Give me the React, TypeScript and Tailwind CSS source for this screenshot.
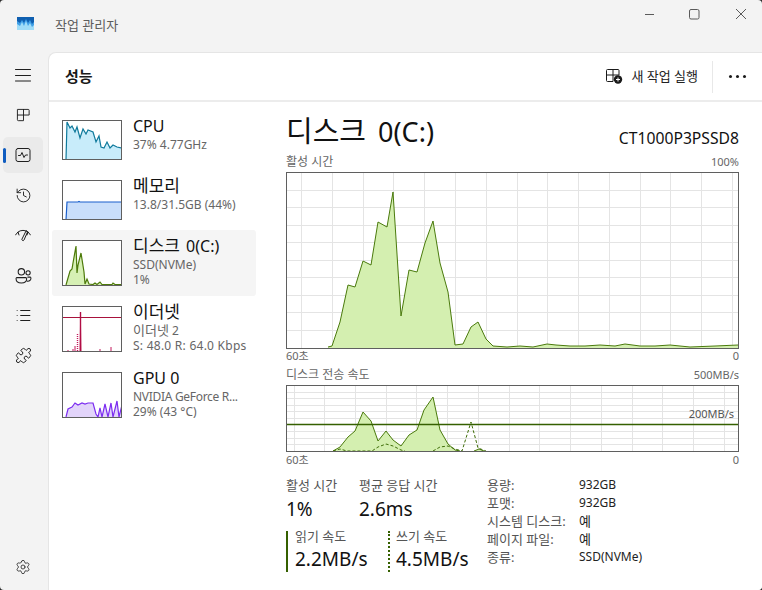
import { History, List, Puzzle, Settings } from 'lucide-react';
import type { ReactNode } from 'react';

const fontStack = "font-['Noto_Sans','Noto_Sans_CJK_KR',sans-serif]";

type P = [number, number];

function pts(list: P[]) {
  return list.map((p) => p.join(',')).join(' ');
}

function Area({ line, base, stroke, fill, dashed, width = 1 }: { line: P[]; base: number; stroke: string; fill?: string; dashed?: boolean; width?: number }) {
  const closed: P[] = [[line[0][0], base], ...line, [line[line.length - 1][0], base]];
  return (
    <>
      {fill && <polygon points={pts(closed)} fill={fill} stroke="none" />}
      <polyline points={pts(line)} fill="none" stroke={stroke} strokeWidth={width} strokeDasharray={dashed ? '3 2' : undefined} />
    </>
  );
}

function Graph({ x, y, w, h, className, children }: { x: number; y: number; w: number; h: number; className: string; children: ReactNode }) {
  return (
    <div className={`border border-[#5f5f5f] bg-white ${className}`}>
      <svg viewBox={`${x + 1} ${y + 1} ${w - 2} ${h - 2}`} preserveAspectRatio="none" className="block w-full h-full">
        {children}
      </svg>
    </div>
  );
}

const cpuLine: P[] = [[66, 160], [67, 122], [70, 128], [72, 126], [75, 132], [77, 127], [80, 138], [83, 129], [86, 134], [88, 130], [93, 132], [96, 142], [99, 136], [101, 147], [104, 148], [107, 142], [110, 148], [113, 145], [117, 147], [122, 148]];
const memLine: P[] = [[66, 220], [67, 202], [78, 202], [79, 201.5], [80, 202], [122, 202]];
const diskLine: P[] = [[66, 285], [70, 271], [72, 269], [73, 263], [76, 246], [77, 273], [78, 265], [81, 253], [84, 272], [85, 284], [87, 279], [89, 284], [93, 284.5], [95, 283], [97, 284.5], [100, 282], [102, 284.5], [112, 284.5], [113, 283], [115, 284.5], [122, 284.5]];
const gpuLine: P[] = [[66, 417], [68, 409], [72, 407], [75, 403], [78, 405], [82, 403], [85, 404], [88, 403], [93, 403], [96, 414], [98, 417], [100, 408], [102, 417], [105, 404], [108, 417], [111, 403], [113, 417], [117, 401], [119, 417], [122, 405]];

const activeLine: P[] = [[328, 347], [332, 346], [340, 322], [348, 285], [355, 287], [363, 261], [371, 265], [378, 222], [387, 227], [393, 192], [401, 316], [409, 270], [417, 272], [425, 243], [433, 221], [440, 263], [448, 292], [455, 345], [463, 344], [471, 327], [478, 322], [486, 339], [493, 346], [507, 347], [520, 346], [533, 347], [547, 344], [556, 345], [570, 346], [585, 346], [600, 345], [615, 346], [625, 344], [640, 346], [655, 346], [670, 345], [690, 347], [715, 346], [738, 345]];
const readLine: P[] = [[333, 451], [340, 447], [348, 437], [355, 431], [363, 412], [371, 421], [378, 441], [386, 431], [393, 440], [401, 446], [409, 435], [417, 430], [424, 410], [433, 397], [440, 430], [448, 444], [455, 450], [460, 451]];
const writeLine1: P[] = [[333, 451], [340, 449], [347, 451], [372, 451], [378, 447], [386, 444], [393, 446], [401, 450], [405, 451]];
const writeLine2: P[] = [[433, 451], [440, 447], [448, 446], [455, 449], [462, 451], [471, 422], [478, 448], [486, 451]];
const smallBump: P[] = [[474, 451], [479, 449], [484, 451]];

const bigGridV = [301, 332, 363, 393, 424, 455, 486, 517, 547, 578, 609, 640, 670, 701, 732];
const lowGridV = [294, 324, 355, 386, 416, 447, 478, 509, 539, 570, 601, 632, 662, 693, 724];

function NavItem({ active, children }: { active?: boolean; children: ReactNode }) {
  return (
    <div className={`relative h-[36px] w-[40px] mb-[4px] flex items-center justify-center rounded-[5px] text-[#1f1f1f] ${active ? 'bg-[#eaeaea]' : ''}`}>
      {active && <span className="absolute left-0 top-[11px] h-[15px] w-[3px] rounded-full bg-[#0f5cc0]" />}
      {children}
    </div>
  );
}

function Icon({ children, size = 16 }: { children: ReactNode; size?: number }) {
  return (
    <svg width={size} height={size} viewBox="0 0 16 16" fill="none" stroke="currentColor" strokeWidth="1" strokeLinecap="round" strokeLinejoin="round">
      {children}
    </svg>
  );
}

function Row({ title, sub, third, selected, graph }: { title: ReactNode; sub: ReactNode; third?: ReactNode; selected?: boolean; graph: ReactNode }) {
  return (
    <div className={`flex ml-[3px] w-[204px] pl-[10px] pt-[10px] gap-[10px] rounded-[3px] ${third ? 'h-[66px]' : 'h-[60px]'} ${selected ? 'bg-[#f5f5f5]' : ''}`}>
      {graph}
      <div className="min-w-0 -mt-[5px] pl-[1px]">
        <div className="text-[16px] leading-[22px] text-[#111] whitespace-nowrap">{title}</div>
        <div className="text-[12px] leading-[15px] text-[#666] whitespace-nowrap">{sub}</div>
        {third && <div className="text-[12px] leading-[15px] text-[#666] whitespace-nowrap">{third}</div>}
      </div>
    </div>
  );
}

const specs = [
  ['용량:', '932GB'],
  ['포맷:', '932GB'],
  ['시스템 디스크:', '예'],
  ['페이지 파일:', '예'],
  ['종류:', 'SSD(NVMe)'],
];

export default function App() {
  return (
    <div className={`w-[762px] h-[590px] bg-[#2a2a2a] overflow-hidden ${fontStack}`}>
      <div className="w-full h-full bg-[#f3f3f3] rounded-[4px] flex flex-col overflow-hidden">
        {/* title bar */}
        <div className="h-[52px] shrink-0 flex items-start relative">
          <svg width="17" height="13" viewBox="0 0 17 13" className="ml-[17px] mt-[17px]">
            <rect width="17" height="13" fill="#9fdcf8" />
            <path d="M0 1 H17 V8 L15 10 L13 6 L11 9 L9 4 L7 9 L5 5 L3 9 L0 7 Z" fill="#3f9fe6" />
            <path d="M0 0 H17 V5 L15 7 L13 3 L11 6 L9 2 L7 6 L5 3 L3 6 L0 4 Z" fill="#0f5fb0" />
          </svg>
          <span className="ml-[21px] mt-[16px] text-[13px] leading-[18px] text-[#5c5c5c]">작업 관리자</span>
          <svg width="111" height="20" viewBox="0 0 111 20" fill="none" stroke="#5a5a5a" strokeWidth="1" className="ml-auto mt-[4px] mr-[6px]">
            <path d="M-1 10.5 H9" />
            <rect x="44.5" y="5.5" width="9.5" height="9.5" rx="1.5" />
            <path d="M91 5 L101 15 M101 5 L91 15" />
          </svg>
        </div>

        <div className="flex-1 flex min-h-0">
          {/* nav rail */}
          <div className="w-[48px] shrink-0 flex flex-col px-[3px] pt-[5px] pb-[1px]">
            <NavItem>
              <Icon size={16}>
                <path d="M0.5 2.5 H15.5 M0.5 8.5 H15.5 M0.5 14 H15.5" />
              </Icon>
            </NavItem>
            <NavItem>
              <Icon size={15}>
                <path d="M2 1.5 H13 A1 1 0 0 1 14 2.5 V7.5 H8 V13.5 H2.5 A1 1 0 0 1 1.5 12.5 V2 Z M8 1.5 V7.5 M1.5 7.5 H8" />
              </Icon>
            </NavItem>
            <NavItem active>
              <Icon size={16}>
                <rect x="1" y="1.5" width="14" height="13" rx="2" />
                <path d="M3.5 8.5 H5.5 L7 5.5 L9 10.5 L10.5 8 H12.5" />
              </Icon>
            </NavItem>
            <NavItem>
              <History size={17} strokeWidth={1.3} />
            </NavItem>
            <NavItem>
              <Icon size={16}>
                <path d="M0.5 8 L3 5 L4 8 M12 8 L13 5 L15.5 8 M3 5 A8 8 0 0 1 13 5" />
                <path d="M11 4 L7 12 A1 1 0 0 0 9 13 L12.5 5 Z" />
              </Icon>
            </NavItem>
            <NavItem>
              <Icon size={17}>
                <circle cx="6" cy="4.5" r="3" />
                <circle cx="12.3" cy="5.5" r="2" />
                <path d="M1.5 10 H10 A1 1 0 0 1 11 11 C11 13.5 9 15 6 15 C3 15 1 13.5 1 11 A1 1 0 0 1 1.5 10 Z" />
                <path d="M12 9.5 H14.5 A1 1 0 0 1 15 10.5 C15 12.5 13.5 13.5 11.5 13.3" />
              </Icon>
            </NavItem>
            <NavItem>
              <List size={17} strokeWidth={1.5} />
            </NavItem>
            <NavItem>
              <Puzzle size={17} strokeWidth={1.4} />
            </NavItem>
            <div className="mt-auto">
              <NavItem>
                <Settings size={16} strokeWidth={1.2} />
              </NavItem>
            </div>
          </div>

          {/* content */}
          <div className="flex-1 min-w-0 bg-white rounded-tl-[8px] border-l border-t border-[#e5e5e5] flex flex-col">
            <div className="h-[49px] shrink-0 border-b-2 border-[#ececec] flex items-center pl-[16px]">
              <span className="text-[15px] font-semibold text-[#1a1a1a]">성능</span>
              <svg width="17" height="15" viewBox="0 0 17 15" fill="none" stroke="#1a1a1a" className="ml-auto">
                <path d="M1.5 0.5 H12 A1 1 0 0 1 13 1.5 V6 H7 V12.5 H1.5 A1 1 0 0 1 0.5 11.5 V1.5 A1 1 0 0 1 1.5 0.5 Z M7 0.5 V6 M0.5 6 H7" />
                <circle cx="12" cy="10.5" r="4.2" fill="#1a1a1a" stroke="none" />
                <path d="M12 8.5 V12.5 M10 10.5 H14" stroke="#fff" />
              </svg>
              <span className="ml-[8px] text-[13px] text-[#222]">새 작업 실행</span>
              <div className="ml-[14px] w-px h-[32px] bg-[#e8e8e8]" />
              <div className="ml-[16px] mr-[16px] flex gap-[4px]">
                <span className="w-[3px] h-[3px] rounded-full bg-[#1a1a1a]" />
                <span className="w-[3px] h-[3px] rounded-full bg-[#1a1a1a]" />
                <span className="w-[3px] h-[3px] rounded-full bg-[#1a1a1a]" />
              </div>
            </div>

            <div className="flex-1 flex min-h-0">
              {/* device list */}
              <div className="w-[237px] shrink-0 pt-[8px]">
                <Row
                  title="CPU"
                  sub="37% 4.77GHz"
                  graph={
                    <Graph x={62} y={120} w={60} h={40} className="w-[60px] h-[40px] shrink-0">
                      <Area line={cpuLine} base={160} stroke="#0f7a9c" fill="#c8ecfa" width={1.2} />
                    </Graph>
                  }
                />
                <Row
                  title={<span className="text-[17px]">메모리</span>}
                  sub="13.8/31.5GB (44%)"
                  graph={
                    <Graph x={62} y={180} w={60} h={40} className="w-[60px] h-[40px] shrink-0">
                      <Area line={memLine} base={220} stroke="#1a5fcc" fill="#c9defa" width={1.2} />
                    </Graph>
                  }
                />
                <Row
                  selected
                  title={
                    <span className="[word-spacing:2px]">
                      <span className="text-[17px]">디스크</span> 0(C:)
                    </span>
                  }
                  sub="SSD(NVMe)"
                  third="1%"
                  graph={
                    <Graph x={62} y={240} w={60} h={46} className="w-[60px] h-[46px] shrink-0">
                      <Area line={diskLine} base={285} stroke="#4d7a0a" fill="#d6f0b4" width={1.2} />
                    </Graph>
                  }
                />
                <Row
                  title={<span className="text-[17px]">이더넷</span>}
                  sub={
                    <>
                      <span className="text-[13px]">이더넷</span> 2
                    </>
                  }
                  third={<span className="tracking-[0.25px]">S: 48.0 R: 64.0 Kbps</span>}
                  graph={
                    <Graph x={62} y={306} w={60} h={46} className="w-[60px] h-[46px] shrink-0">
                      <polygon points="79,351 80.5,312 82,351" fill="#e8a9bd" />
                      <path d="M80.5 312 V351" stroke="#b00d45" strokeWidth="1.4" />
                      <path d="M77.5 334 V351" stroke="#c2185b" strokeWidth="1.4" strokeDasharray="1 1" />
                      <path d="M68 351 V350 M73 351 V349 M75 351 V346 M100 351 V349 M111 351 V347" stroke="#c2185b" />
                      <path d="M63 317.5 H121" stroke="#a8123c" strokeWidth="1" />
                    </Graph>
                  }
                />
                <Row
                  title="GPU 0"
                  sub={<span className="tracking-[-0.3px]">NVIDIA GeForce R...</span>}
                  third="29% (43 °C)"
                  graph={
                    <Graph x={62} y={372} w={60} h={46} className="w-[60px] h-[46px] shrink-0">
                      <Area line={gpuLine} base={417} stroke="#7c2df0" fill="#e2d4fa" width={1.2} />
                    </Graph>
                  }
                />
              </div>

              {/* detail panel */}
              <div className="w-[453px] shrink-0 pt-[10px]">
                <div className="flex items-end justify-between h-[40px]">
                  <span className="text-[27px] leading-[40px] text-[#111] whitespace-nowrap [word-spacing:5px]">
                    <span className="text-[29px]">디스크</span> 0(C:)
                  </span>
                  <span className="text-[15.7px] leading-[24px] mb-[2px] text-[#111]">CT1000P3PSSD8</span>
                </div>
                <div className="flex justify-between text-[11px] leading-[14px] text-[#666] pt-[1px] mt-[2px] mb-[3px]">
                  <span className="text-[12px]">활성 시간</span>
                  <span>100%</span>
                </div>
                <Graph x={286} y={172} w={453} h={177} className="w-[453px] h-[177px]">
                  {bigGridV.map((gx) => (
                    <path key={gx} d={`M${gx}.5 172 V348`} stroke="#e4e4e4" />
                  ))}
                  {[190, 207, 225, 242, 260, 277, 295, 312, 330].map((gy) => (
                    <path key={gy} d={`M286 ${gy}.5 H739`} stroke="#e4e4e4" />
                  ))}
                  <Area line={activeLine} base={348} stroke="#4a7a0c" fill="#d4efb0" />
                </Graph>
                <div className="flex justify-between text-[11px] leading-[14px] text-[#666]">
                  <span>60초</span>
                  <span>0</span>
                </div>
                <div className="flex justify-between text-[11px] leading-[14px] text-[#666] mt-[5px] mb-[3px]">
                  <span className="text-[12px]">디스크 전송 속도</span>
                  <span>500MB/s</span>
                </div>
                <div className="relative">
                  <Graph x={286} y={385} w={453} h={67} className="w-[453px] h-[67px]">
                    {lowGridV.map((gx) => (
                      <path key={gx} d={`M${gx}.5 385 V451`} stroke="#e4e4e4" />
                    ))}
                    {[392, 398, 405, 411, 418, 431, 438, 444].map((gy) => (
                      <path key={gy} d={`M286 ${gy}.5 H739`} stroke="#e4e4e4" />
                    ))}
                    <Area line={readLine} base={451} stroke="#4a7a0c" fill="#d4efb0" />
                    <Area line={smallBump} base={451} stroke="#4a7a0c" fill="#d4efb0" />
                    <Area line={writeLine1} base={451} stroke="#3f6d08" dashed />
                    <Area line={writeLine2} base={451} stroke="#3f6d08" dashed />
                    <path d="M286 424.5 H739" stroke="#356000" strokeWidth="1.4" />
                  </Graph>
                  <span className="absolute right-[5px] top-[22px] text-[11px] leading-[14px] text-[#555]">200MB/s</span>
                </div>
                <div className="flex justify-between text-[11px] leading-[14px] text-[#666] mt-px">
                  <span>60초</span>
                  <span>0</span>
                </div>

                <div className="flex mt-[10px]">
                  <div className="w-[201px] shrink-0">
                    <div className="flex">
                      <div className="w-[73px]">
                        <div className="text-[13px] leading-[16px] text-[#555] whitespace-nowrap">활성 시간</div>
                        <div className="text-[19px] leading-[26px] mt-[3px] text-[#111]">1%</div>
                      </div>
                      <div>
                        <div className="text-[13px] leading-[16px] text-[#555] whitespace-nowrap">평균 응답 시간</div>
                        <div className="text-[19px] leading-[26px] mt-[3px] text-[#111]">2.6ms</div>
                      </div>
                    </div>
                    <div className="flex mt-[9px]">
                      <div className="w-[102px] h-[41px] border-l-2 border-[#356000] pl-[7px]">
                        <div className="text-[13px] leading-[14px] -mt-[2px] text-[#555] whitespace-nowrap">읽기 속도</div>
                        <div className="text-[19px] leading-[26px] mt-[3px] text-[#111] whitespace-nowrap">2.2MB/s</div>
                      </div>
                      <div className="h-[41px] border-l-2 border-dotted border-[#356000] pl-[6px]">
                        <div className="text-[13px] leading-[14px] -mt-[2px] text-[#555] whitespace-nowrap">쓰기 속도</div>
                        <div className="text-[19px] leading-[26px] mt-[3px] text-[#111] whitespace-nowrap">4.5MB/s</div>
                      </div>
                    </div>
                  </div>
                  <div className="text-[12px] leading-[18px] -mt-px">
                    {specs.map(([k, v]) => (
                      <div key={k} className="flex h-[18px]">
                        <span className="w-[92px] text-[13px] text-[#555] whitespace-nowrap">{k}</span>
                        <span className={v === '예' ? 'text-[13px] text-[#222]' : 'text-[#222]'}>{v}</span>
                      </div>
                    ))}
                  </div>
                </div>
              </div>
            </div>
          </div>
        </div>
      </div>
    </div>
  );
}
